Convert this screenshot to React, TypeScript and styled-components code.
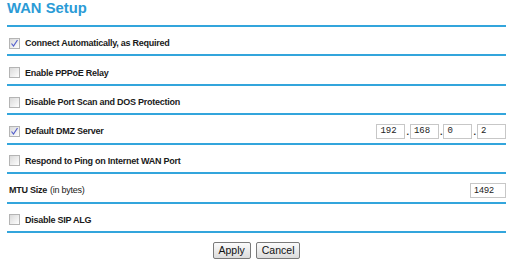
import React from 'react'
import styled, { createGlobalStyle } from 'styled-components'

const GlobalStyle = createGlobalStyle`
  body {
    margin: 0;
    background: #ffffff;
    font-family: "Liberation Sans", Arial, sans-serif;
  }
`

const Page = styled.div`
  width: 499px;
  padding: 0 4px 0 7px;
`

const Title = styled.h1`
  margin: 0;
  height: 27px;
  box-sizing: border-box;
  padding-top: 1px;
  font-size: 14.8px;
  font-weight: bold;
  color: #2b9bd6;
  border-bottom: 2px solid #33a5dc;
  line-height: 14px;
`

const Row = styled.div`
  display: flex;
  align-items: center;
  justify-content: space-between;
  height: 29.43px;
  box-sizing: border-box;
  padding: 5px 0 0 2px;
  border-bottom: 2px solid #33a5dc;
`

const Label = styled.label`
  display: flex;
  align-items: center;
  gap: 5px;
  font-size: 9px;
  letter-spacing: -0.25px;
  font-weight: bold;
  color: #1a1a1a;
`

const Hint = styled.span`
  font-weight: normal;
  margin-left: -2px;
`

const Box = styled.span<{ $checked?: boolean }>`
  display: inline-flex;
  align-items: center;
  justify-content: center;
  width: 11px;
  height: 11px;
  box-sizing: border-box;
  border: 1px solid #b4b4b4;
  background: linear-gradient(135deg, #dadada 0%, #f3f3f3 70%, #ffffff 100%);
`

const IpGroup = styled.div`
  display: flex;
  align-items: flex-end;
  gap: 1px;
`

const Octet = styled.input`
  width: 29px;
  height: 15px;
  box-sizing: border-box;
  padding: 0 3px;
  border: 1px solid #c7c7c7;
  font-family: "Liberation Mono", "Courier New", monospace;
  font-size: 9px;
  color: #222;
  outline: none;
`

const Dot = styled.span`
  font-size: 9px;
  font-weight: bold;
  line-height: 9px;
  color: #222;
  padding-bottom: 2px;
`

const Mtu = styled.input`
  width: 36px;
  height: 15px;
  box-sizing: border-box;
  padding: 0 3px;
  border: 1px solid #c7c7c7;
  font-family: "Liberation Sans", Arial, sans-serif;
  font-size: 9px;
  color: #222;
  outline: none;
`

const Buttons = styled.div`
  display: flex;
  justify-content: center;
  gap: 5px;
  padding-top: 9px;
`

const Button = styled.button`
  height: 17px;
  padding: 0 5px;
  border: 1px solid #7a7a7a;
  border-radius: 2px;
  background: linear-gradient(#fbfbfb, #dcdcdc);
  font-family: "Liberation Sans", Arial, sans-serif;
  font-size: 10.5px;
  color: #111;
  line-height: 14px;
`

const Check = ({ checked }: { checked?: boolean }) => (
  <Box $checked={checked}>
    {checked && (
      <svg width="9" height="9" viewBox="0 0 9 9">
        <path d="M1.5 4.5 L3.5 7 L7.5 1" fill="none" stroke="#5560cc" strokeWidth="1.2" />
      </svg>
    )}
  </Box>
)

const options = [
  { text: 'Connect Automatically, as Required', checked: true },
  { text: 'Enable PPPoE Relay' },
  { text: 'Disable Port Scan and DOS Protection' },
]

export default function App() {
  return (
    <>
      <GlobalStyle />
      <Page>
        <Title>WAN Setup</Title>
        {options.map((o) => (
          <Row key={o.text}>
            <Label>
              <Check checked={o.checked} />
              {o.text}
            </Label>
          </Row>
        ))}
        <Row>
          <Label>
            <Check checked />
            Default DMZ Server
          </Label>
          <IpGroup>
            <Octet defaultValue="192" />
            <Dot>.</Dot>
            <Octet defaultValue="168" />
            <Dot>.</Dot>
            <Octet defaultValue="0" />
            <Dot>.</Dot>
            <Octet defaultValue="2" />
          </IpGroup>
        </Row>
        <Row>
          <Label>
            <Check />
            Respond to Ping on Internet WAN Port
          </Label>
        </Row>
        <Row>
          <Label>
            MTU Size <Hint>(in bytes)</Hint>
          </Label>
          <Mtu defaultValue="1492" />
        </Row>
        <Row>
          <Label>
            <Check />
            Disable SIP ALG
          </Label>
        </Row>
        <Buttons>
          <Button>Apply</Button>
          <Button>Cancel</Button>
        </Buttons>
      </Page>
    </>
  )
}
